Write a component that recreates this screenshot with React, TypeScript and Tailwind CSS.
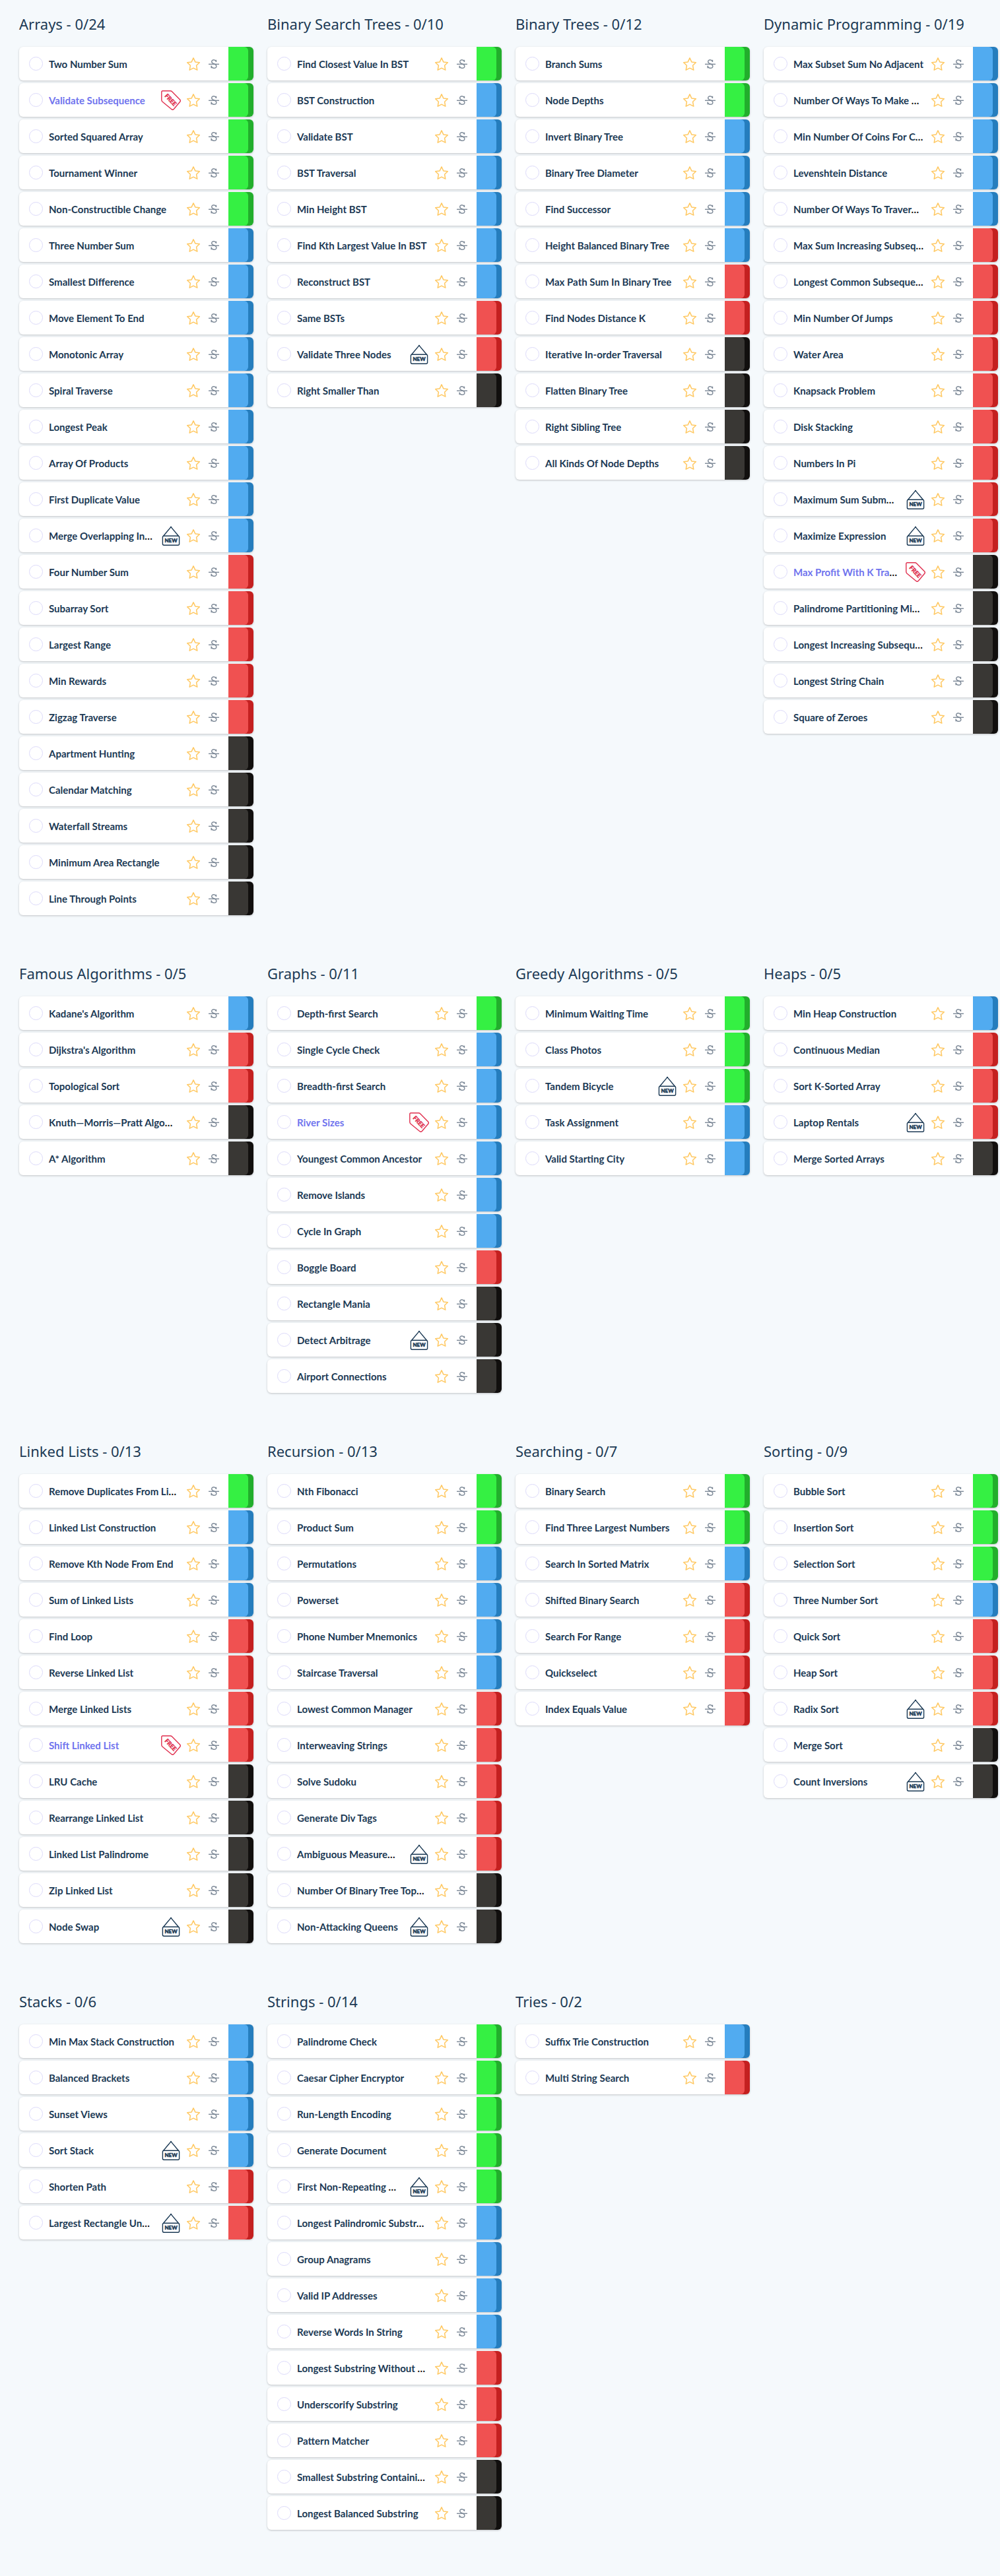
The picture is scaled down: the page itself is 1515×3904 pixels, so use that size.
import React from "react";

type Level = "g" | "b" | "r" | "k";
type Problem = { name: string; level: Level; tag?: "new" | "free"; clipped: boolean };

const faces: Record<Level, string> = {
  g: "bg-[#35f043]",
  b: "bg-[#51abf0]",
  r: "bg-[#f05151]",
  k: "bg-[#393734]",
};
const edges: Record<Level, string> = {
  g: "bg-[#22ae2c]",
  b: "bg-[#257dbd]",
  r: "bg-[#c42020]",
  k: "bg-[#110f0e]",
};
const labels: Record<Level, string> = { g: "Easy", b: "Medium", r: "Hard", k: "Very hard" };

// Each entry is "level Name"; a trailing * marks a new problem, ! a free one, ~ a shortened name.
const p = (...entries: string[]): Problem[] =>
  entries.map((e) => {
    const mark = e[e.length - 1];
    const tag = mark === "*" ? "new" : mark === "!" ? "free" : undefined;
    const untagged = tag ? e.slice(2, -1) : e.slice(2);
    const clipped = untagged.endsWith("~");
    return { level: e[0] as Level, name: clipped ? untagged.slice(0, -1) : untagged, tag, clipped };
  });

const groups: { title: string; problems: Problem[] }[] = [
  {
    title: "Arrays",
    problems: p(
      "g Two Number Sum", "g Validate Subsequence!", "g Sorted Squared Array", "g Tournament Winner",
      "g Non-Constructible Change", "b Three Number Sum", "b Smallest Difference", "b Move Element To End",
      "b Monotonic Array", "b Spiral Traverse", "b Longest Peak", "b Array Of Products",
      "b First Duplicate Value", "b Merge Overlapping In~*", "r Four Number Sum", "r Subarray Sort",
      "r Largest Range", "r Min Rewards", "r Zigzag Traverse", "k Apartment Hunting", "k Calendar Matching",
      "k Waterfall Streams", "k Minimum Area Rectangle", "k Line Through Points",
    ),
  },
  {
    title: "Binary Search Trees",
    problems: p(
      "g Find Closest Value In BST", "b BST Construction", "b Validate BST", "b BST Traversal",
      "b Min Height BST", "b Find Kth Largest Value In BST", "b Reconstruct BST", "r Same BSTs",
      "r Validate Three Nodes*", "k Right Smaller Than",
    ),
  },
  {
    title: "Binary Trees",
    problems: p(
      "g Branch Sums", "g Node Depths", "b Invert Binary Tree", "b Binary Tree Diameter", "b Find Successor",
      "b Height Balanced Binary Tree", "r Max Path Sum In Binary Tree", "r Find Nodes Distance K",
      "k Iterative In-order Traversal", "k Flatten Binary Tree", "k Right Sibling Tree",
      "k All Kinds Of Node Depths",
    ),
  },
  {
    title: "Dynamic Programming",
    problems: p(
      "b Max Subset Sum No Adjacent", "b Number Of Ways To Make ~", "b Min Number Of Coins For C~",
      "b Levenshtein Distance", "b Number Of Ways To Traver~", "r Max Sum Increasing Subseq~",
      "r Longest Common Subseque~", "r Min Number Of Jumps", "r Water Area", "r Knapsack Problem",
      "r Disk Stacking", "r Numbers In Pi", "r Maximum Sum Subm~*", "r Maximize Expression*",
      "k Max Profit With K Tra~!", "k Palindrome Partitioning Mi~",
      "k Longest Increasing Subsequ~", "k Longest String Chain", "k Square of Zeroes",
    ),
  },
  {
    title: "Famous Algorithms",
    problems: p(
      "b Kadane's Algorithm", "r Dijkstra's Algorithm", "r Topological Sort",
      "k Knuth—Morris—Pratt Algo~", "k A* Algorithm",
    ),
  },
  {
    title: "Graphs",
    problems: p(
      "g Depth-first Search", "b Single Cycle Check", "b Breadth-first Search", "b River Sizes!",
      "b Youngest Common Ancestor", "b Remove Islands", "b Cycle In Graph", "r Boggle Board",
      "k Rectangle Mania", "k Detect Arbitrage*", "k Airport Connections",
    ),
  },
  {
    title: "Greedy Algorithms",
    problems: p(
      "g Minimum Waiting Time", "g Class Photos", "g Tandem Bicycle*", "b Task Assignment",
      "b Valid Starting City",
    ),
  },
  {
    title: "Heaps",
    problems: p(
      "b Min Heap Construction", "r Continuous Median", "r Sort K-Sorted Array", "r Laptop Rentals*",
      "k Merge Sorted Arrays",
    ),
  },
  {
    title: "Linked Lists",
    problems: p(
      "g Remove Duplicates From Li~", "b Linked List Construction", "b Remove Kth Node From End",
      "b Sum of Linked Lists", "r Find Loop", "r Reverse Linked List", "r Merge Linked Lists",
      "r Shift Linked List!", "k LRU Cache", "k Rearrange Linked List", "k Linked List Palindrome",
      "k Zip Linked List", "k Node Swap*",
    ),
  },
  {
    title: "Recursion",
    problems: p(
      "g Nth Fibonacci", "g Product Sum", "b Permutations", "b Powerset", "b Phone Number Mnemonics",
      "b Staircase Traversal", "r Lowest Common Manager", "r Interweaving Strings", "r Solve Sudoku",
      "r Generate Div Tags", "r Ambiguous Measure~*", "k Number Of Binary Tree Top~",
      "k Non-Attacking Queens*",
    ),
  },
  {
    title: "Searching",
    problems: p(
      "g Binary Search", "g Find Three Largest Numbers", "b Search In Sorted Matrix",
      "r Shifted Binary Search", "r Search For Range", "r Quickselect", "r Index Equals Value",
    ),
  },
  {
    title: "Sorting",
    problems: p(
      "g Bubble Sort", "g Insertion Sort", "g Selection Sort", "b Three Number Sort", "r Quick Sort",
      "r Heap Sort", "r Radix Sort*", "k Merge Sort", "k Count Inversions*",
    ),
  },
  {
    title: "Stacks",
    problems: p(
      "b Min Max Stack Construction", "b Balanced Brackets", "b Sunset Views", "b Sort Stack*",
      "r Shorten Path", "r Largest Rectangle Un~*",
    ),
  },
  {
    title: "Strings",
    problems: p(
      "g Palindrome Check", "g Caesar Cipher Encryptor", "g Run-Length Encoding", "g Generate Document",
      "g First Non-Repeating ~*", "b Longest Palindromic Substr~", "b Group Anagrams",
      "b Valid IP Addresses", "b Reverse Words In String", "r Longest Substring Without ~",
      "r Underscorify Substring", "r Pattern Matcher", "k Smallest Substring Containi~",
      "k Longest Balanced Substring",
    ),
  },
  { title: "Tries", problems: p("b Suffix Trie Construction", "r Multi String Search") },
];

function NewSign() {
  return (
    <svg viewBox="0 0 30 32" className="h-8 w-[30px] shrink-0" fill="none" stroke="#1b3954" strokeWidth="1.4" strokeLinejoin="round" role="img" aria-label="New">
      <path d="M3.6 16.2 15 2.6l11.4 13.6" />
      <circle cx="15" cy="2.8" r="1.1" fill="#1b3954" stroke="none" />
      <rect x="2.4" y="16.2" width="25.2" height="14" rx="2" />
      <text x="15" y="26.2" textAnchor="middle" fill="#1b3954" strokeWidth="0.5" className="font-['Lato'] text-[8px] font-black">NEW</text>
    </svg>
  );
}

function FreeTag() {
  return (
    <svg viewBox="0 0 30 30" className="h-[30px] w-[30px] shrink-0" fill="none" stroke="#e0304f" strokeWidth="1.4" strokeLinejoin="round" role="img" aria-label="Free">
      <path d="M2.4 0.8H14Q15.6 0.8 16.8 1.9L28.6 14Q30 15.6 28.7 17.2L19.4 28.2Q17.6 30 15.8 28.5L1.9 17Q0.8 15.8 0.8 14.2V2.4Q0.8 0.8 2.4 0.8Z" />
      <text transform="translate(14.4 14.4) rotate(47)" y="3" textAnchor="middle" fill="#e0304f" strokeWidth="0.4" className="font-['Lato'] text-[9px] font-black">FREE</text>
    </svg>
  );
}

function Star() {
  return (
    <svg viewBox="0 0 20 20" className="h-5 w-5" fill="none" stroke="#ffc861" strokeWidth="1.5" strokeLinejoin="round" aria-hidden="true">
      <path d="M10 0.9 12.8 6.9 19.3 7.7 14.6 12.3 15.8 19.1 10 16.2 4.2 19.1 5.4 12.3 0.7 7.7 7.2 6.9Z" />
    </svg>
  );
}

function Row({ problem }: { problem: Problem }) {
  const { name, level, tag, clipped } = problem;
  return (
    <li className="flex h-[51px] rounded-md bg-white shadow-[0_1px_3px_rgba(0,0,0,0.22)]">
      <div className="flex min-w-0 flex-1 items-center pr-3.5 pl-[15px]">
        <input type="checkbox" aria-label={`Mark ${name} as done`} className="h-[21px] w-[21px] shrink-0 appearance-none rounded-full border border-[#dcdafa] bg-white" />
        <div className="ml-[9px] min-w-0 flex-1 font-['Lato',sans-serif] text-[15px] leading-6 font-bold whitespace-nowrap text-[#111]">
          <a href="#" className={tag === "free" ? "text-[#6f74ee]" : "text-[#1b3954]"}>{name}</a>
          {clipped && "…"}
        </div>
        {tag && <span className="flex">{tag === "new" ? <NewSign /> : <FreeTag />}</span>}
        <button type="button" aria-label={`Star ${name}`} className="ml-[9px] shrink-0"><Star /></button>
        <button type="button" aria-label={`Skip ${name}`} className="ml-[13px] flex h-5 w-4 shrink-0 items-center justify-center text-[#7f8b99]">
          <svg viewBox="0 0 17 16" className="h-4 w-4" fill="none" stroke="currentColor" aria-hidden="true">
            <path d="M12.2 4.9V1.3M12.1 3.9C11.2 2 10 1.3 8.4 1.3 6.4 1.3 5 2.5 5 4.2c0 2 1.6 2.7 3.7 3.5 2.3.9 3.9 1.7 3.9 3.7 0 1.9-1.6 3.2-3.9 3.2-2.1 0-3.4-1-4.2-3M4.4 10.6v4" strokeWidth="1.5" />
            <path d="M0 8.3h17" strokeWidth="1.5" />
          </svg>
        </button>
      </div>
      <div role="img" aria-label={labels[level]} className={`w-[38px] shrink-0 rounded-r-md ${edges[level]}`}>
        <div className={`h-full w-[30px] rounded-r-md ${faces[level]}`} />
      </div>
    </li>
  );
}

export default function App() {
  return (
    <main className="grid min-h-screen grid-cols-4 content-start gap-x-[21px] gap-y-[52px] bg-[#f5f9fc] pr-[3px] pb-[70px] pl-[29px]">
      {groups.map((g) => (
        <section key={g.title} className="min-w-0">
          <h2 className="flex h-[71px] items-center font-['Noto_Sans',sans-serif] text-[22px] leading-8 whitespace-nowrap text-[#1b3954]">
            {g.title} - 0/{g.problems.length}
          </h2>
          <ul className="flex flex-col gap-1">
            {g.problems.map((x) => (
              <Row key={x.name} problem={x} />
            ))}
          </ul>
        </section>
      ))}
    </main>
  );
}
